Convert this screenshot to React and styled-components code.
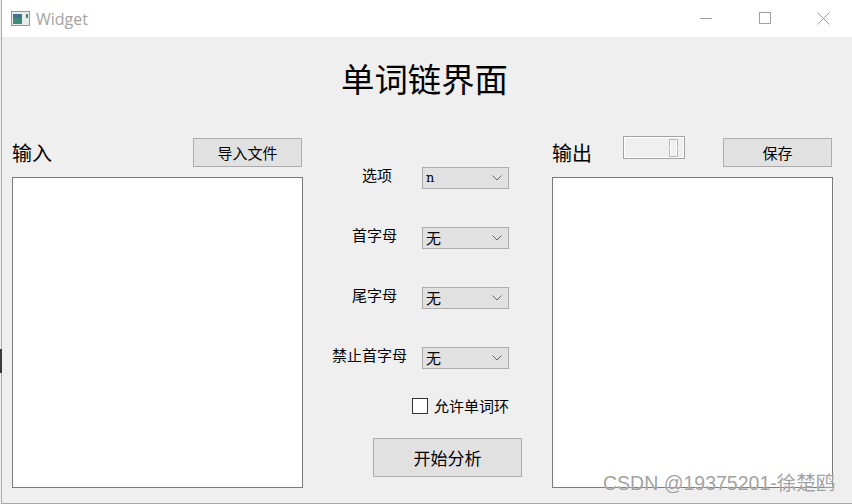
import React from "react";
import styled, { createGlobalStyle } from "styled-components";

const GlobalStyle = createGlobalStyle`
  html, body {
    margin: 0;
    padding: 0;
    background: #efefef;
  }
  * {
    box-sizing: border-box;
  }
`;

const Window = styled.div`
  position: relative;
  display: flex;
  flex-direction: column;
  width: 851px;
  height: 504px;
  background: #efefef;
  border-left: 1px solid #a9a9a9;
  border-bottom: 1px solid #a9a9a9;
  margin-left: 1px;
  font-family: "Noto Sans CJK SC", "Liberation Sans", sans-serif;
  color: #000;
`;

const TitleBar = styled.div`
  display: flex;
  align-items: center;
  height: 37px;
  flex: none;
  padding-left: 9px;
  background: #fff;
`;

const TitleText = styled.span`
  margin-left: 5px;
  font-family: "Open Sans", "Liberation Sans", sans-serif;
  font-size: 16px;
  color: #a3a3a3;
`;

const WindowButtons = styled.div`
  display: flex;
  margin-left: auto;
  margin-right: 22px;
  gap: 45px;
`;

const Heading = styled.h1`
  flex: none;
  height: 101px;
  margin: 0;
  padding-top: 16px;
  padding-right: 5px;
  text-align: center;
  font-size: 33.4px;
  line-height: 50px;
  font-weight: 400;
`;

const Columns = styled.div`
  display: grid;
  grid-template-columns: 291px 249px 281px;
  padding-left: 10px;
`;

const Side = styled.section`
  display: flex;
  flex-direction: column;
`;

const SideHeader = styled.div`
  display: flex;
  align-items: center;
  height: 29px;
  padding-right: 1px;
  margin-bottom: 10px;
`;

const SideTitle = styled.span`
  font-size: 20px;
  line-height: 29px;
`;

const PushButton = styled.button`
  width: ${(p) => p.$width}px;
  height: ${(p) => p.$height}px;
  padding: 0;
  background: #e1e1e1;
  border: 1px solid #adadad;
  font-family: inherit;
  font-size: ${(p) => p.$size}px;
  color: #000;
`;

const SideAction = styled.div`
  margin-left: auto;
`;

const TextArea = styled.div`
  width: ${(p) => p.$width}px;
  height: 311px;
  background: #fff;
  border: 1px solid #7a7a7a;
`;

const Spinner = styled.div`
  display: flex;
  flex-direction: column;
  align-items: flex-end;
  gap: 1px;
  width: 62px;
  height: 23px;
  margin: 0 0 10px 31px;
  padding: 2px 6px 1px 0;
  border: 1px solid #a3a3a3;
  box-shadow: inset -1px -1px 0 #fff, inset 1px 1px 0 #fff;
`;

const SpinnerStep = styled.div`
  width: 9px;
  flex: 1;
  border: 1px solid #b8b8b8;
  ${(p) => (p.$up ? "border-bottom: none;" : "border-top: none;")}
  box-shadow: inset 1px 0 0 #fff, inset -1px 0 0 #fff;
`;

const Middle = styled.section`
  display: flex;
  flex-direction: column;
  align-items: flex-end;
  padding: 29px 43px 0 0;
`;

const OptionRow = styled.div`
  display: flex;
  align-items: flex-start;
  height: 22px;
  margin-bottom: 38px;
`;

const OptionLabel = styled.label`
  margin-right: ${(p) => p.$gap}px;
  font-size: 15px;
  line-height: 16px;
`;

const Combo = styled.div`
  display: flex;
  align-items: center;
  justify-content: space-between;
  width: 87px;
  height: 22px;
  padding: 0 6px 0 3px;
  background: #e1e1e1;
  border: 1px solid #adadad;
  font-family: ${(p) => (p.$latin ? '"DejaVu Serif", serif' : "inherit")};
  font-size: ${(p) => (p.$latin ? 13 : 15)}px;
  line-height: 18px;
`;

const CheckRow = styled.div`
  display: flex;
  align-items: center;
  height: 16px;
  margin-top: -9px;
  gap: 6px;
  font-size: 15px;
  line-height: 14px;
`;

const CheckBox = styled.span`
  width: 16px;
  height: 16px;
  background: #fff;
  border: 1px solid #333;
`;

const StartRow = styled.div`
  margin: 24px -13px 0 0;
`;

const Watermark = styled.div`
  position: absolute;
  left: 601px;
  top: 472px;
  font-family: "Liberation Sans", "Noto Sans CJK SC", sans-serif;
  font-size: 19.5px;
  line-height: 22px;
  white-space: nowrap;
  color: rgba(130, 130, 130, 0.75);
  text-shadow: 0 0 1px #fff;
`;

const EdgeMark = styled.div`
  position: absolute;
  left: -2px;
  top: 349px;
  width: 2px;
  height: 24px;
  background: #3b3b3b;
`;

const AppIcon = () => (
  <svg width="20" height="16" viewBox="0 0 20 16">
    <rect x="0.5" y="0.5" width="18" height="14" fill="#e8eeee" stroke="#8d9a9f" />
    <rect x="2" y="3" width="9" height="10" fill="#3f8a78" />
    <rect x="2" y="3" width="9" height="4" fill="#44708c" />
    <rect x="15" y="3" width="2" height="4" fill="#4c7f72" />
  </svg>
);

const MinimizeIcon = () => (
  <svg width="14" height="13" viewBox="0 0 14 13">
    <path d="M0 6.5H12" stroke="#a0a0a0" fill="none" />
  </svg>
);

const MaximizeIcon = () => (
  <svg width="13" height="13" viewBox="0 0 13 13">
    <rect x="0.5" y="0.5" width="11" height="11" stroke="#a0a0a0" fill="none" />
  </svg>
);

const CloseIcon = () => (
  <svg width="13" height="13" viewBox="0 0 13 13">
    <path d="M0.5 0.5L12.5 12.5M12.5 0.5L0.5 12.5" stroke="#a0a0a0" fill="none" />
  </svg>
);

const Chevron = () => (
  <svg width="10" height="6" viewBox="0 0 10 6">
    <path d="M0.5 0.5L5 5L9.5 0.5" stroke="#666" fill="none" />
  </svg>
);

const options = [
  { label: "选项", value: "n", gap: 30, latin: true },
  { label: "首字母", value: "无", gap: 25 },
  { label: "尾字母", value: "无", gap: 25 },
  { label: "禁止首字母", value: "无", gap: 15 },
];

export default function App() {
  return (
    <>
      <GlobalStyle />
      <Window>
        <TitleBar>
          <AppIcon />
          <TitleText>Widget</TitleText>
          <WindowButtons>
            <MinimizeIcon />
            <MaximizeIcon />
            <CloseIcon />
          </WindowButtons>
        </TitleBar>
        <Heading>单词链界面</Heading>
        <Columns>
          <Side>
            <SideHeader>
              <SideTitle>输入</SideTitle>
              <SideAction>
                <PushButton $width={109} $height={29} $size={15}>导入文件</PushButton>
              </SideAction>
            </SideHeader>
            <TextArea $width={291} />
          </Side>
          <Middle>
            {options.map((opt) => (
              <OptionRow key={opt.label}>
                <OptionLabel $gap={opt.gap}>{opt.label}</OptionLabel>
                <Combo $latin={opt.latin}>
                  {opt.value}
                  <Chevron />
                </Combo>
              </OptionRow>
            ))}
            <CheckRow>
              <CheckBox />
              允许单词环
            </CheckRow>
            <StartRow>
              <PushButton $width={149} $height={39} $size={17}>开始分析</PushButton>
            </StartRow>
          </Middle>
          <Side>
            <SideHeader>
              <SideTitle>输出</SideTitle>
              <Spinner>
                <SpinnerStep $up />
                <SpinnerStep />
              </Spinner>
              <SideAction>
                <PushButton $width={109} $height={29} $size={15}>保存</PushButton>
              </SideAction>
            </SideHeader>
            <TextArea $width={281} />
          </Side>
        </Columns>
        <EdgeMark />
        <Watermark>CSDN @19375201-徐楚鸥</Watermark>
      </Window>
    </>
  );
}
